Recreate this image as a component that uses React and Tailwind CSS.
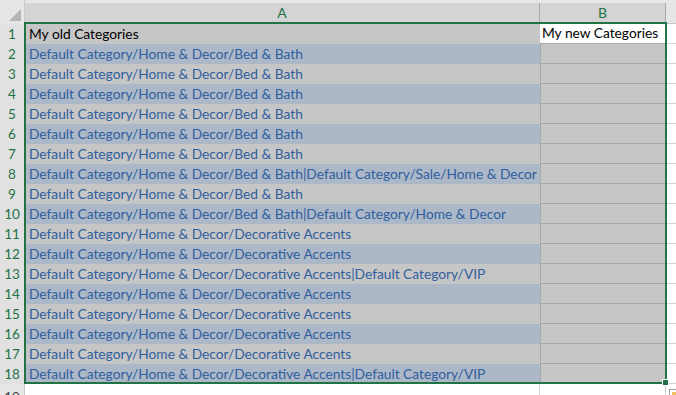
import React from "react";

const rowsA = [
  "Default Category/Home & Decor/Bed & Bath",
  "Default Category/Home & Decor/Bed & Bath",
  "Default Category/Home & Decor/Bed & Bath",
  "Default Category/Home & Decor/Bed & Bath",
  "Default Category/Home & Decor/Bed & Bath",
  "Default Category/Home & Decor/Bed & Bath",
  "Default Category/Home & Decor/Bed & Bath|Default Category/Sale/Home & Decor",
  "Default Category/Home & Decor/Bed & Bath",
  "Default Category/Home & Decor/Bed & Bath|Default Category/Home & Decor",
  "Default Category/Home & Decor/Decorative Accents",
  "Default Category/Home & Decor/Decorative Accents",
  "Default Category/Home & Decor/Decorative Accents|Default Category/VIP",
  "Default Category/Home & Decor/Decorative Accents",
  "Default Category/Home & Decor/Decorative Accents",
  "Default Category/Home & Decor/Decorative Accents",
  "Default Category/Home & Decor/Decorative Accents",
  "Default Category/Home & Decor/Decorative Accents|Default Category/VIP",
];

export default function App() {
  return (
    <div
      className="relative w-[676px] h-[395px] overflow-hidden bg-white"
      style={{ fontFamily: "Lato, 'Open Sans', sans-serif" }}
    >
      {/* top strip */}
      <div className="flex h-[3px]">
        <div className="w-[25px] shrink-0 bg-[#e6e6e6] border-r border-[#c8c8c8]" />
        <div className="flex-1 bg-[#e6e6e6]" />
      </div>
      {/* header row */}
      <div className="flex h-[21px]">
        <div className="w-[25px] shrink-0 bg-[#e6e6e6] border-r border-[#c8c8c8] flex items-end justify-end pr-[3px] pb-[3px]">
          <svg width="12" height="12" viewBox="0 0 12 12">
            <polygon points="12,0 12,12 0,12" fill="#b4b4b4" />
          </svg>
        </div>
        <div className="w-[515px] shrink-0 bg-[#d4d4d4] border-r border-[#aaaaaa] flex items-center justify-center text-[14px] text-[#217346] pb-[2px]">
          A
        </div>
        <div className="w-[126px] shrink-0 bg-[#d4d4d4] border-r border-[#aaaaaa] flex items-center justify-center text-[14px] text-[#217346] pb-[2px]">
          B
        </div>
        <div className="flex-1 bg-[#e6e6e6] border-b border-[#c8c8c8]" />
      </div>

      {/* row 1 */}
      <div className="flex h-[20px]">
        <div className="w-[25px] shrink-0 bg-[#e1e1e1] border-r border-[#c8c8c8] flex items-center justify-center text-[13.5px] text-[#217346]">
          1
        </div>
        <div className="w-[515px] shrink-0 bg-[#c6c6c6] flex items-center pl-[4px] text-[13.75px] text-black whitespace-nowrap overflow-hidden">
          My old Categories
        </div>
        <div className="w-[126px] shrink-0 bg-white border-r border-b border-[#aaaaaa] flex items-center pl-[2px] text-[13.75px] text-black whitespace-nowrap overflow-hidden">
          My new Categories
        </div>
        <div className="flex-1 border-b border-[#d4d4d4]" />
      </div>

      {rowsA.map((t, i) => {
        const n = i + 2;
        const blue = n % 2 === 0;
        return (
          <div key={n} className="flex h-[20px]">
            <div className="w-[25px] shrink-0 bg-[#e1e1e1] border-r border-[#c8c8c8] flex items-center justify-center text-[13.5px] text-[#217346]">
              {n}
            </div>
            <div
              className={
                "w-[515px] shrink-0 flex items-center pl-[4px] text-[13.75px] text-[#2f5e9e] whitespace-nowrap overflow-hidden " +
                (blue ? "bg-[#acb8c8]" : "bg-[#c6c6c6]")
              }
            >
              {t}
            </div>
            <div className="w-[126px] shrink-0 bg-[#c6c6c6] border-l border-r border-b border-[#a8a8a8]" />
            <div className="flex-1 border-b border-[#d4d4d4]" />
          </div>
        );
      })}

      {/* row 19 */}
      <div className="flex h-[20px]">
        <div className="w-[25px] shrink-0 bg-[#e6e6e6] border-r border-[#c8c8c8] flex items-start justify-center pt-[3px] text-[13.5px] text-[#444444]">
          19
        </div>
        <div className="w-[515px] shrink-0 border-r border-[#d4d4d4]" />
        <div className="w-[126px] shrink-0 border-r border-[#d4d4d4]" />
        <div className="flex-1" />
      </div>

      {/* selection border */}
      <div className="absolute left-[24px] top-[22px] w-[643px] h-[362px] border-2 border-[#217346] pointer-events-none" />
      {/* fill handle */}
      <div className="absolute left-[662px] top-[379px] w-[7px] h-[7px] bg-[#217346] border border-white" />
      {/* quick analysis icon */}
      <div className="absolute left-[669px] top-[389px] w-[10px] h-[10px] border border-[#9f9f9f] bg-white">
        <div className="absolute left-[2px] top-[2px] w-[5px] h-[5px] bg-[#f0c060]" />
      </div>
    </div>
  );
}
